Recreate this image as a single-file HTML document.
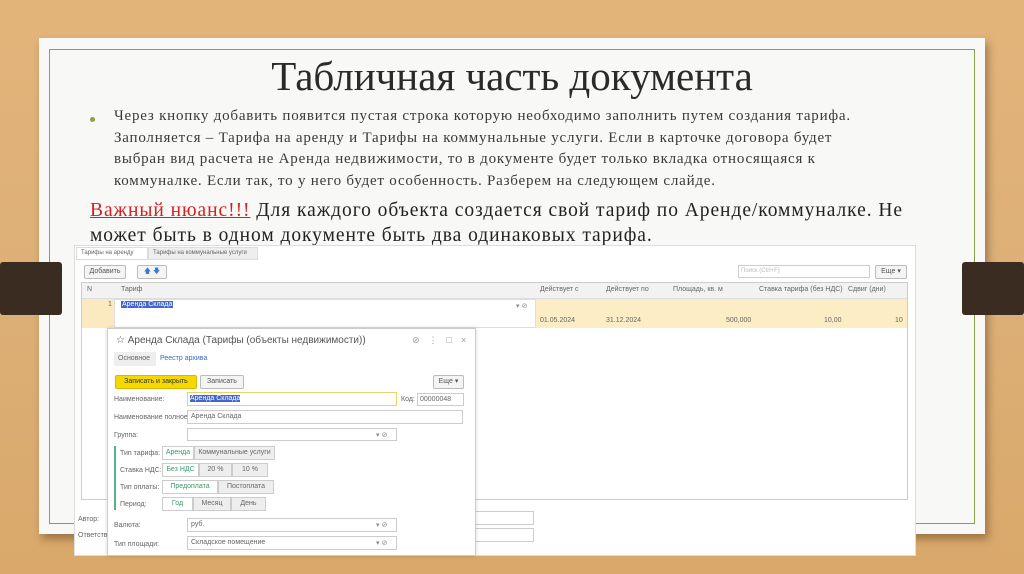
<!DOCTYPE html>
<html><head><meta charset="utf-8"><style>
*{margin:0;padding:0;box-sizing:border-box}
body{width:1024px;height:574px;overflow:hidden;position:relative;background:linear-gradient(180deg,#e3b47a,#ddb078 50%,#d9a86a);font-family:"Liberation Sans",sans-serif;}
.a{position:absolute}
.paper{left:39px;top:38px;width:946px;height:496px;background:#f8f8f7;box-shadow:3px 5px 8px rgba(80,50,20,.45)}
.gb{left:49px;top:49px;width:926px;height:475px;border:1.5px solid #8aa04a}
.bar{background:#3b2c22;height:53px;top:262px;border-radius:3px}
.serif{font-family:"Liberation Serif",serif;color:#333;white-space:nowrap}
.s{font-size:7px;color:#666;white-space:nowrap}
.box{border:1px solid #ccc;background:#fff}
.btn{position:absolute;border:1px solid #bbb;background:#f4f4f4;border-radius:2px;font-size:7px;color:#555;text-align:center;line-height:12px;height:14px}
.seg{position:absolute;height:14px;border:1px solid #ccc;background:#eee;font-size:7px;color:#666;text-align:center;line-height:12px}
.on{background:#fff;color:#3a9a6a}
.dd{position:absolute;font-size:7px;color:#888;white-space:nowrap}
</style></head><body>
<div class="a paper"></div>
<div class="a gb"></div>
<div class="a bar" style="left:0;width:62px"></div>
<div class="a bar" style="left:962px;width:62px"></div>

<div class="a serif" style="left:0;width:1024px;top:52px;text-align:center;font-size:41px;color:#2a2a2a">Табличная часть документа</div>
<div class="a" style="left:90px;top:117px;width:5px;height:5px;border-radius:50%;background:#8aa04a"></div>
<div class="a serif" style="left:114px;top:106px;font-size:15px;letter-spacing:0.78px;line-height:21.6px;color:#3a3a3a">Через кнопку добавить появится пустая строка которую необходимо заполнить путем создания тарифа.<br>Заполняется – Тарифа на аренду и Тарифы на коммунальные услуги. Если в карточке договора будет<br>выбран вид расчета не Аренда недвижимости, то в документе будет только вкладка относящаяся к<br>коммуналке. Если так, то у него будет особенность. Разберем на следующем слайде.</div>
<div class="a serif" style="left:90px;top:198px;font-size:19.5px;letter-spacing:0.95px;line-height:25px;color:#222"><span style="color:#d62020;text-decoration:underline">Важный нюанс!!!</span> Для каждого объекта создается свой тариф по Аренде/коммуналке. Не<br>может быть в одном документе быть два одинаковых тарифа.</div>

<!-- screenshot -->
<div class="a" style="left:74px;top:245px;width:842px;height:311px;background:#fff;border:1px solid #ddd"></div>
<div class="a s" style="left:76px;top:247px;height:13px;width:72px;border:1px solid #ddd;background:#fff;padding:2px 4px;font-size:6px">Тарифы на аренду</div>
<div class="a s" style="left:148px;top:247px;height:13px;width:110px;border:1px solid #ddd;background:#eee;padding:2px 4px;font-size:6px">Тарифы на коммунальные услуги</div>
<div class="btn" style="left:84px;top:265px;width:42px">Добавить</div>
<div class="btn" style="left:137px;top:265px;width:30px;color:#3a7ad0">🡅 🡇</div>
<div class="a box" style="left:738px;top:265px;width:132px;height:13px;font-size:6px;color:#bbb;padding:2px">Поиск (Ctrl+F)</div>
<div class="btn" style="left:875px;top:265px;width:32px">Еще ▾</div>
<div class="a box" style="left:81px;top:282px;width:827px;height:218px"></div>
<div class="a" style="left:82px;top:283px;width:825px;height:16px;background:#f2f2f2;border-bottom:1px solid #ddd"></div>
<div class="a s" style="left:87px;top:286px">N</div>
<div class="a s" style="left:121px;top:286px">Тариф</div>
<div class="a s" style="left:540px;top:286px">Действует с</div>
<div class="a s" style="left:606px;top:286px">Действует по</div>
<div class="a s" style="left:673px;top:286px">Площадь, кв. м</div>
<div class="a s" style="left:759px;top:286px">Ставка тарифа (без НДС)</div>
<div class="a s" style="left:848px;top:286px">Сдвиг (дни)</div>
<div class="a" style="left:82px;top:299px;width:32px;height:29px;background:#fbe9c0"></div>
<div class="a s" style="left:108px;top:301px">1</div>
<div class="a" style="left:114px;top:299px;width:422px;height:29px;background:#fff;border:1px solid #ddd"></div>
<div class="dd" style="left:516px;top:302px">▾ ⊘</div>
<div class="a s" style="left:121px;top:301px;background:#4466cc;color:#fff;padding:0 1px">Аренда Склада</div>
<div class="a" style="left:536px;top:299px;width:371px;height:29px;background:#fdedc4"></div>
<div class="a s" style="left:540px;top:317px">01.05.2024</div>
<div class="a s" style="left:606px;top:317px">31.12.2024</div>
<div class="a s" style="left:726px;top:317px">500,000</div>
<div class="a s" style="left:824px;top:317px">10,00</div>
<div class="a s" style="left:895px;top:317px">10</div>
<div class="a s" style="left:78px;top:516px">Автор:</div>
<div class="a s" style="left:78px;top:532px">Ответстве</div>
<div class="a box" style="left:474px;top:511px;width:60px;height:14px"></div>
<div class="a box" style="left:474px;top:528px;width:60px;height:14px"></div>

<!-- modal -->
<div class="a" style="left:107px;top:328px;width:369px;height:228px;background:#fff;border:1px solid #ccc;box-shadow:0 0 4px rgba(0,0,0,.15)"></div>
<div class="a" style="left:116px;top:335px;font-size:10px;color:#555;white-space:nowrap">☆ Аренда Склада (Тарифы (объекты недвижимости))</div>
<div class="a s" style="left:412px;top:335px;font-size:9px;color:#999;letter-spacing:9px">⊘⋮□×</div>
<div class="a s" style="left:114px;top:352px;height:14px;background:#eee;padding:3px 4px;width:42px">Основное</div>
<div class="a s" style="left:160px;top:355px;color:#3a6ac0">Реестр архива</div>
<div class="btn" style="left:115px;top:375px;width:82px;background:#f5d800;border-color:#d8b800;color:#333">Записать и закрыть</div>
<div class="btn" style="left:200px;top:375px;width:44px">Записать</div>
<div class="btn" style="left:433px;top:375px;width:31px">Еще ▾</div>
<div class="a s" style="left:114px;top:396px">Наименование:</div>
<div class="a box" style="left:187px;top:392px;width:210px;height:14px;border-color:#e8d26a"></div>
<div class="a s" style="left:190px;top:395px;background:#4466cc;color:#fff">Аренда Склада</div>
<div class="a s" style="left:401px;top:396px">Код:</div>
<div class="a box s" style="left:417px;top:393px;width:47px;height:13px;padding:2px">00000048</div>
<div class="a s" style="left:114px;top:414px">Наименование полное:</div>
<div class="a box s" style="left:187px;top:410px;width:276px;height:14px;padding:2px 3px">Аренда Склада</div>
<div class="a s" style="left:114px;top:432px">Группа:</div>
<div class="a box" style="left:187px;top:428px;width:210px;height:13px"></div>
<div class="dd" style="left:376px;top:431px">▾ ⊘</div>
<div class="a" style="left:114px;top:446px;width:2px;height:64px;background:#5ab08a"></div>
<div class="a s" style="left:120px;top:450px">Тип тарифа:</div>
<div class="seg on" style="left:162px;top:446px;width:32px">Аренда</div>
<div class="seg" style="left:194px;top:446px;width:81px">Коммунальные услуги</div>
<div class="a s" style="left:120px;top:467px">Ставка НДС:</div>
<div class="seg on" style="left:162px;top:463px;width:37px">Без НДС</div>
<div class="seg" style="left:199px;top:463px;width:33px">20 %</div>
<div class="seg" style="left:232px;top:463px;width:36px">10 %</div>
<div class="a s" style="left:120px;top:484px">Тип оплаты:</div>
<div class="seg on" style="left:162px;top:480px;width:56px">Предоплата</div>
<div class="seg" style="left:218px;top:480px;width:56px">Постоплата</div>
<div class="a s" style="left:120px;top:501px">Период:</div>
<div class="seg on" style="left:162px;top:497px;width:31px">Год</div>
<div class="seg" style="left:193px;top:497px;width:38px">Месяц</div>
<div class="seg" style="left:231px;top:497px;width:35px">День</div>
<div class="a s" style="left:114px;top:522px">Валюта:</div>
<div class="a box s" style="left:187px;top:518px;width:210px;height:14px;padding:2px 3px">руб.</div>
<div class="dd" style="left:376px;top:521px">▾ ⊘</div>
<div class="a s" style="left:114px;top:541px">Тип площади:</div>
<div class="a box s" style="left:187px;top:536px;width:210px;height:14px;padding:2px 3px">Складское помещение</div>
<div class="dd" style="left:376px;top:539px">▾ ⊘</div>
</body></html>
